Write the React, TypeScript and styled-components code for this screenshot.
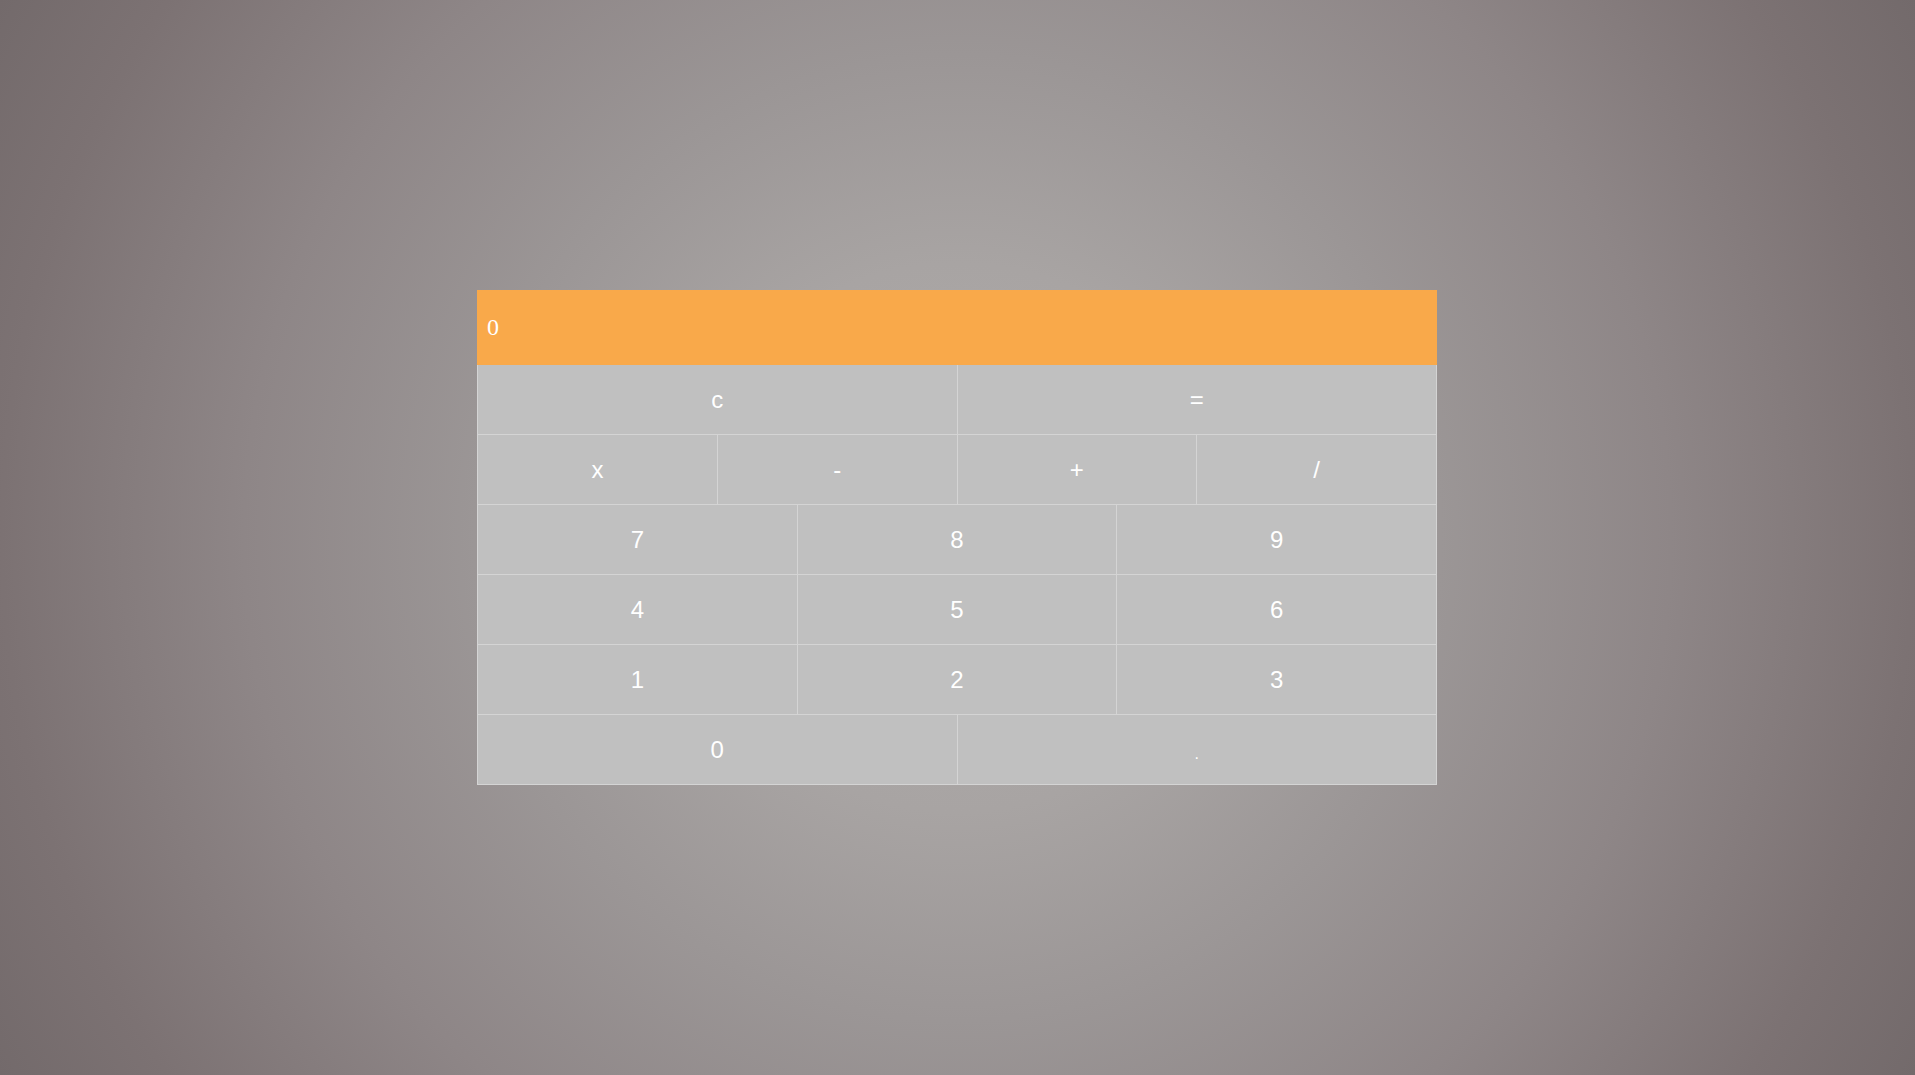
import React from "react";
import styled, { createGlobalStyle } from "styled-components";

const GlobalStyle = createGlobalStyle`
  html, body { margin: 0; padding: 0; height: 100%; }
  body {
    background: radial-gradient(circle at center, #b0acab 0%, #a8a4a3 25%, #9b9696 44%, #8e8687 65%, #7c7273 87%, #736a6b 100%);
    font-family: "Liberation Sans", Arial, sans-serif;
  }
  #root { height: 100%; }
`;

const Page = styled.div`
  height: 100vh;
  display: flex;
  align-items: center;
  justify-content: center;
  padding-right: 1px;
  box-sizing: border-box;
`;

const Calculator = styled.div`
  width: 960px;
  display: flex;
  flex-direction: column;
`;

const Display = styled.div`
  height: 75px;
  background: #f9a94a;
  color: #ffffff;
  font-family: "Liberation Serif", "Times New Roman", serif;
  font-size: 24px;
  display: flex;
  align-items: center;
  padding-left: 10px;
  box-sizing: border-box;
`;

const Row = styled.div<{ $cols: number }>`
  display: grid;
  grid-template-columns: repeat(${(p) => p.$cols}, 1fr);
  height: 70px;
  box-sizing: border-box;
  border-left: 1px solid #d4d4d4;
  border-top: 1px solid #d4d4d4;
`;

const Key = styled.button`
  background: #c0c0c0;
  color: #ffffff;
  border: none;
  border-right: 1px solid #d4d4d4;
  border-bottom: 1px solid #d4d4d4;
  margin-top: -1px;
  font-family: "Liberation Sans", Arial, sans-serif;
  font-size: 24px;
  padding: 0;
  display: flex;
  align-items: center;
  justify-content: center;
  cursor: pointer;
`;

const Dot = styled.span`
  font-size: 16px;
  transform: translateY(4px);
`;

const rows: string[][] = [
  ["c", "="],
  ["x", "-", "+", "/"],
  ["7", "8", "9"],
  ["4", "5", "6"],
  ["1", "2", "3"],
  ["0", "."],
];

export default function App() {
  return (
    <>
      <GlobalStyle />
      <Page>
        <Calculator>
          <Display>0</Display>
          {rows.map((r, i) => (
            <Row key={i} $cols={r.length}>
              {r.map((k) => (
                <Key key={k}>{k === "." ? <Dot>.</Dot> : k}</Key>
              ))}
            </Row>
          ))}
        </Calculator>
      </Page>
    </>
  );
}
